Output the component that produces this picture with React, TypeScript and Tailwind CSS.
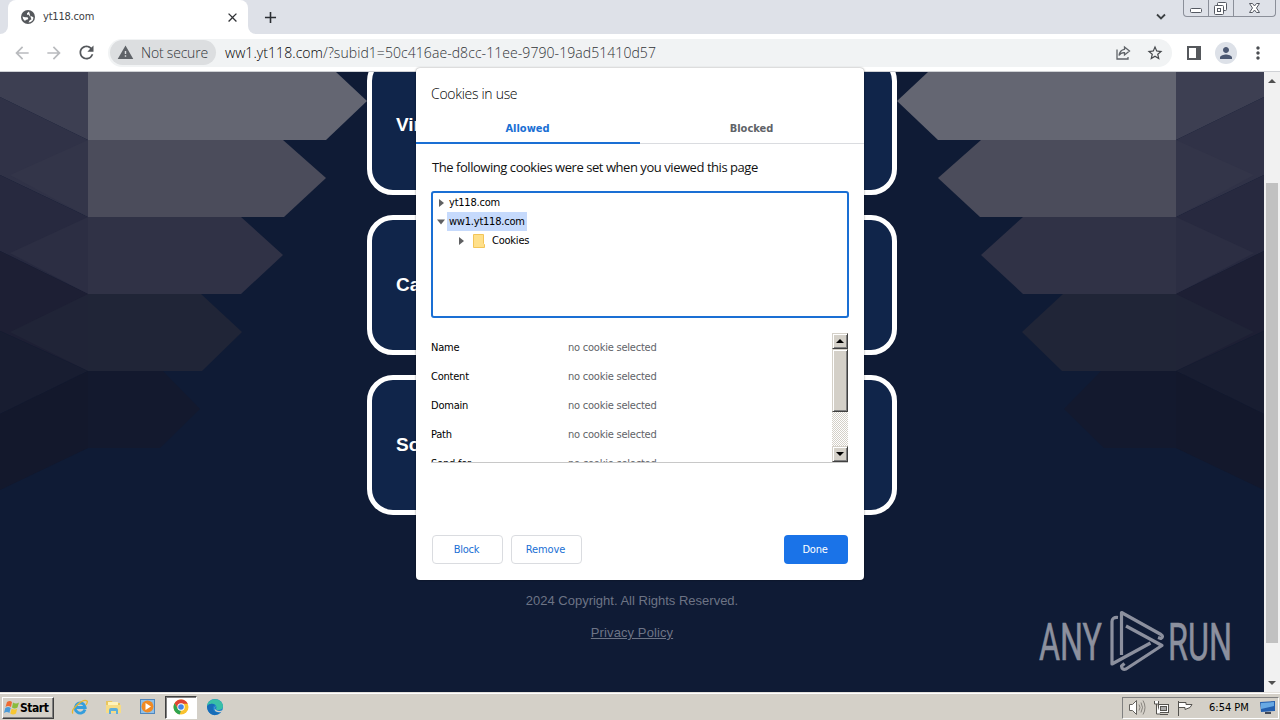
import React from "react";
import { MdArrowBack, MdArrowForward, MdRefresh, MdWarning, MdStarBorder, MdPerson, MdMoreVert, MdClose, MdAdd } from "react-icons/md";

function Globe() {
  return (
    <svg width="16" height="16" viewBox="0 0 16 16">
      <circle cx="8" cy="8" r="7" fill="#55585c" />
      <path d="M2.500 7.500 5 8.200h2.500l.8 1.300-1 1.300H6l-1 1.200A5.600 5.600 0 0 1 2.500 7.500Z" fill="#fff" />
      <path d="M9 2.600 7 4.200v1.600h2l.5 1.500h2.200l1.800 1.200A5.600 5.600 0 0 1 8.500 13.500l1.200-2.200 1.800-1-.6-1.400" fill="#fff" />
    </svg>
  );
}

function TabStrip() {
  return (
    <div className="flex h-[34px] bg-[#dee1e8]">
      <div className="flex w-2 shrink-0 bg-white"><div className="w-2 rounded-br-lg bg-[#dee1e8]" /></div>
      <div className="flex w-[240px] shrink-0 items-center rounded-t-lg bg-white pl-3 pr-2">
        <Globe />
        <span className="ml-[7px] flex-1 pt-px text-[11px] tracking-[-0.2px] text-[#3c4043]">yt118.com</span>
        <MdClose className="text-[#303236]" size={15} />
      </div>
      <div className="flex w-2 shrink-0 bg-white"><div className="w-2 rounded-bl-lg bg-[#dee1e8]" /></div>
      <div className="flex w-7 items-center justify-center"><MdAdd size={19} className="text-[#2b2e33]" /></div>
      <div className="flex-1" />
      <svg width="12" height="34" className="mr-[16px]"><path d="m2 14.500 4 4 4-4" fill="none" stroke="#3c4043" strokeWidth="1.800" /></svg>
      <div className="mr-[4px] flex h-[17px] rounded-b-[4px] border border-t-0 border-[#8b8f99]">
        <div className="w-[25px] border-r border-[#8b8f99]">
          <svg width="24" height="16"><rect x="6.500" y="8.500" width="11" height="4" rx="1" fill="#fff" stroke="#555962" /></svg>
        </div>
        <div className="w-[25px] border-r border-[#8b8f99]">
          <svg width="24" height="16" fill="#fff" stroke="#555962"><rect x="8.500" y="2.500" width="9" height="8" rx="1" /><rect x="5.500" y="5.500" width="9" height="9" rx="1" /><rect x="8.500" y="8.500" width="3" height="3" /></svg>
        </div>
        <div className="w-[41px]">
          <svg width="41" height="16"><path d="M15.500 3.500h3l2 2.500 2-2.500h3L22.500 8l3 4.500h-3l-2-2.500-2 2.500h-3l3-4.500Z" fill="#fff" stroke="#555962" /></svg>
        </div>
      </div>
    </div>
  );
}

function Toolbar() {
  return (
    <div className="flex h-[38px] items-center border-b border-[#cfd1d5] bg-white pl-3">
      <MdArrowBack size={20} className="text-[#b9bbbe]" />
      <MdArrowForward size={20} className="ml-[12px] text-[#b9bbbe]" />
      <MdRefresh size={21} className="ml-[12px] text-[#55585c]" />
      <div className="ml-[11px] flex h-7 w-[1064px] items-center rounded-full bg-[#f1f3f4]">
        <div className="ml-0.5 flex h-[25px] w-[106px] items-center rounded-full bg-[#dcdee0] pl-[7px]">
          <MdWarning size={17} className="text-[#5f6368]" />
          <span className="ml-[7px] whitespace-nowrap font-['Open_Sans',sans-serif] text-[14px] font-light tracking-[-0.2px] text-[#33363a]">Not secure</span>
        </div>
        <span className="ml-[9px] flex-1 whitespace-nowrap font-['Open_Sans',sans-serif] text-[14px] font-light tracking-[0.065px] text-black">ww1.yt118.com<span className="text-[#303236]">/?subid1=50c416ae-d8cc-11ee-9790-19ad51410d57</span></span>
        <svg width="18" height="18" viewBox="0 0 18 18" fill="none" stroke="#5f6368" strokeWidth="1.300" className="mr-[14px]"><path d="M3 5.500v9.500h11v-2M10.500 3l5 4-5 4V8.700C8 8.500 6.200 9.500 5 11.500 5.500 8 7.500 5.700 10.500 5.300Z" /></svg>
        <MdStarBorder size={18} className="mr-[8px] text-[#45484c]" />
      </div>
      <svg width="14" height="14" className="ml-[15px]"><rect x="1" y="1" width="12" height="12" fill="none" stroke="#55585c" strokeWidth="2" /><rect x="9" y="1" width="4" height="12" fill="#55585c" /></svg>
      <div className="ml-[14px] flex h-[22px] w-[22px] items-center justify-center rounded-full bg-[#dde1e8]"><MdPerson size={18} className="text-[#4c5872]" /></div>
      <MdMoreVert size={20} className="ml-[11px] text-[#4b4e52]" />
    </div>
  );
}

function Ribbons() {
  return (
    <>
      <path d="M88 72H336L367 101 326 140H88Z" fill="#646672" />
      <path d="M88 140H283L326 178 284 217H88Z" fill="#4b4c5b" />
      <path d="M88 217H241L283 255 241 294H88Z" fill="#303246" />
      <path d="M88 294H201L242 332 202 371H88Z" fill="#202537" />
      <path d="M88 371H163L200 409 160 448H88Z" fill="#13192e" />
      <path d="M0 72H88V140L0 97Z" fill="#3d3f52" />
      <path d="M0 97 88 140V217L0 175Z" fill="#303247" />
      <path d="M88 140 10 175 88 217Z" fill="#333549" />
      <path d="M0 175 88 217V294L0 251Z" fill="#27293f" />
      <path d="M88 217 10 253 88 294Z" fill="#2c2e43" />
      <path d="M0 251 88 294V371L0 331Z" fill="#1d1f34" />
      <path d="M88 294 10 332 88 371Z" fill="#202437" />
      <path d="M0 331 88 371 0 414Z" fill="#181d31" />
      <path d="M0 414 88 371V448L0 490Z" fill="#13182c" />
    </>
  );
}

function Watermark() {
  return (
    <svg width="204" height="66" viewBox="1035 607 204 66" className="absolute left-[1035px] top-[535px]" fill="#8c909e">
      <text x="1039" y="659.500" fontSize="52" fontFamily="Roboto" stroke="#8c909e" strokeWidth=".6" textLength="63" lengthAdjust="spacingAndGlyphs">ANY</text>
      <text x="1168" y="659.500" fontSize="52" fontFamily="Roboto" stroke="#8c909e" strokeWidth=".6" textLength="64" lengthAdjust="spacingAndGlyphs">RUN</text>
      <g fill="none" stroke="#8c909e" strokeWidth="3.200" strokeLinejoin="round">
        <path d="M1118 617.500q-6-.5-6 4v42.500l38.500-21" />
        <path d="M1121.500 655V612.500L1161 634.500q3 2 0 4l-3-1" />
        <path d="M1126 626 1162 645.500 1126 669q-4 1.500-4.500-3l3-2.500" />
      </g>
    </svg>
  );
}

function Page() {
  return (
    <div className="flex h-[620px]">
      <div className="relative flex w-[1264px] flex-col items-center overflow-hidden bg-[#0f1b35]">
        <svg width="1264" height="620" viewBox="0 72 1264 620" className="absolute left-0 top-0">
          <Ribbons />
          <g transform="translate(1264 0) scale(-1 1)"><Ribbons /></g>
        </svg>
        <div className="relative -mt-[17px] flex flex-col gap-5">
          {["Vir", "Car", "Soc"].map((t) => (
            <div key={t} className="flex h-[140px] w-[530px] items-center rounded-[26px] border-[5px] border-white bg-[#10254a] pl-6 font-['Liberation_Sans',sans-serif] text-[19px] font-bold text-white">{t}</div>
          ))}
        </div>
        <p className="mt-[76px] font-['Liberation_Sans',sans-serif] text-[13px] leading-5 text-[#6d7485]">2024 Copyright. All Rights Reserved.</p>
        <p className="mt-[12px] font-['Liberation_Sans',sans-serif] text-[13px] leading-5 tracking-[0.1px] text-[#6d7485] underline">Privacy Policy</p>
        <Watermark />
      </div>
      <div className="flex w-4 flex-col items-center bg-[#f1f1f1]">
        <svg width="16" height="111"><path d="m4 11 4-4 4 4Z" fill="#505050" /></svg>
        <div className="h-[460px] w-3 bg-[#c1c1c1]" />
        <svg width="16" height="49"><path d="m4 38 4 4 4-4Z" fill="#505050" /></svg>
      </div>
    </div>
  );
}

function ClassicButton({ down }: { down?: boolean }) {
  return (
    <div className="flex h-4 w-4 shrink-0 items-center justify-center border border-b-[#404040] border-l-[#d4d0c8] border-r-[#404040] border-t-[#d4d0c8] bg-[#d4d0c8] shadow-[inset_1px_1px_#fff,inset_-1px_-1px_#808080]">
      <svg width="8" height="4">{down ? <path d="M0 0h8L4 4Z" /> : <path d="M0 4h8L4 0Z" />}</svg>
    </div>
  );
}

function Arrow({ open }: { open?: boolean }) {
  return <svg width="8" height="8" className="shrink-0">{open ? <path d="M0 1.500h8L4 6.500Z" fill="#5f6062" /> : <path d="M2 0v8l5-4Z" fill="#5f6062" />}</svg>;
}

function Dialog() {
  return (
    <div className="absolute left-[416px] top-[68px] flex h-[512px] w-[448px] flex-col rounded-[4px] bg-white text-[11px] tracking-[-0.22px] text-black shadow-[0_0_2px_rgba(0,0,0,0.5)]">
      <h1 className="mt-[16px] pl-[15px] font-['Open_Sans',sans-serif] text-[14px] font-light leading-5 tracking-[-0.3px] text-black">Cookies in use</h1>
      <div className="mt-[8px] flex h-8 text-center text-[11px] font-bold leading-[34px] tracking-[0px]">
        <div className="w-1/2 border-b-2 border-[#1a6fd4] pr-px text-[#1a6fd4]">Allowed</div>
        <div className="w-1/2 border-b border-[#dadce0] pr-px text-[#5f6368]">Blocked</div>
      </div>
      <p className="mt-[13px] pl-4 font-['Open_Sans',sans-serif] text-[13px] leading-5 tracking-[-0.45px] text-[#111]">The following cookies were set when you viewed this page</p>
      <div className="ml-[15px] mt-[14px] h-[127px] w-[418px] rounded-[3px] border-2 border-[#1a6fd4] pl-1">
        <div className="flex h-[19px] items-center"><Arrow /><span className="ml-[2px] px-0.5 pt-[2px]">yt118.com</span></div>
        <div className="flex h-[19px] items-center"><Arrow open /><span className="ml-[2px] h-[19px] bg-[#c6dafc] px-0.5 leading-[20px]">ww1.yt118.com</span></div>
        <div className="flex h-[19px] items-center pl-5">
          <Arrow />
          <svg width="12" height="14" className="ml-2"><path d="M.5.500h10v9l1 1v3H.5Z" fill="#ffe08a" stroke="#f3c558" /></svg>
          <span className="ml-[7px] pt-[2px]">Cookies</span>
        </div>
      </div>
      <div className="ml-[15px] mt-[15px] flex h-[130px] w-[417px] border-b border-[#c8c8c8]">
        <div className="flex-1 overflow-hidden pt-px">
          {["Name", "Content", "Domain", "Path", "Send for"].map((t) => (
            <div key={t} className="flex h-[29px] items-center"><span className="w-[137px]">{t}</span><span className="text-[#5f6368]">no cookie selected</span></div>
          ))}
        </div>
        <div className="flex w-4 flex-col bg-[#ebe8e3]">
          <ClassicButton />
          <div className="h-[63px] border border-b-[#404040] border-l-[#d4d0c8] border-r-[#404040] border-t-[#d4d0c8] bg-[#d4d0c8] shadow-[inset_1px_1px_#fff,inset_-1px_-1px_#808080]" />
          <div className="flex-1 bg-[conic-gradient(#fff_25%,#d4d0c8_0_50%,#fff_0_75%,#d4d0c8_0)] bg-[length:2px_2px]" />
          <ClassicButton down />
        </div>
      </div>
      <div className="mt-[72px] flex h-[29px] gap-2 px-4 text-[#1a6fd4]">
        <button className="w-[71px] rounded-[4px] border border-[#dadce0] pr-[2px] pt-px">Block</button>
        <button className="w-[71px] rounded-[4px] border border-[#dadce0] pr-[2px] pt-px tracking-[-0.1px]">Remove</button>
        <div className="flex-1" />
        <button className="w-16 rounded-[4px] bg-[#1a73e8] pr-[2px] pt-px text-white">Done</button>
      </div>
    </div>
  );
}

function WinFlag() {
  return (
    <svg width="16" height="16" viewBox="0 0 16 16">
      <path d="M3 2q3-2 5 0L7 7Q4 5 1.500 7Z" fill="#ee6a32" /><path d="M9 2.500q3 2 6 0L13.500 7.500q-3 2-5.500 0Z" fill="#8abb3c" />
      <path d="M1.300 8q3-2 5.400 0L5.400 13Q3 11 0 13Z" fill="#4a9ad8" /><path d="M7.700 8.500q3 2 5.500 0L12 13.500q-3 2-5.700 0Z" fill="#f8c732" />
    </svg>
  );
}

function Taskbar() {
  return (
    <div className="flex h-7 items-center border-t border-[#e4e1dc] bg-[#d4d0c8] shadow-[inset_0_1px_#fff]">
      <div className="mt-[2px] ml-[2px] flex h-[22px] w-[52px] items-center border border-b-[#404040] border-l-white border-r-[#404040] border-t-white pl-[1px] text-[12px] font-bold tracking-[-0.45px] text-black shadow-[inset_-1px_-1px_#808080]"><WinFlag /><span>Start</span></div>
      <svg width="18" height="18" viewBox="0 0 18 18" className="ml-[17px]">
        <path d="M14 11.500A5 5 0 1 1 14.200 9.500H5" fill="none" stroke="#359edc" strokeWidth="2.800" /><path d="M2 15.500C-1 12 12 0 16 3q1 1-1 4" fill="none" stroke="#e8b62c" strokeWidth="1.300" />
      </svg>
      <svg width="18" height="18" viewBox="0 0 18 18" className="ml-[16px]">
        <path d="M1 3h6l1 2h7v9H1Z" fill="#e9c65e" /><path d="M3 4h10v5H3Z" fill="#fff3ba" /><path d="M1 7h15v8H1Z" fill="#f6dc86" /><path d="M4 16v-4q0-2 2-2h5q2 0 2 2v4h-2v-3H6v3Z" fill="#5daedb" />
      </svg>
      <svg width="18" height="18" viewBox="0 0 18 18" className="ml-[16px]">
        <rect x="1.500" y="1.500" width="14" height="14" fill="#8fc0e9" stroke="#5087bd" /><circle cx="8.500" cy="8.500" r="6" fill="#f08a24" /><path d="M6.500 5v7l5.500-3.500Z" fill="#fff" />
      </svg>
      <div className="mt-[1px] ml-[8px] flex h-[23px] w-[32px] items-center justify-center border border-b-white border-l-[#404040] border-r-white border-t-[#404040] bg-white shadow-[inset_1px_1px_#808080]">
        <svg width="16" height="16" viewBox="0 0 16 16">
          <circle cx="8" cy="8" r="7.500" fill="#f9c22e" /><path d="M1.500 4.300a7.500 7.500 0 0 1 13.300.500H8L5 10Z" fill="#df4435" /><path d="M1.500 4.300 5 10l3 1.500-1.300 3.900A7.500 7.500 0 0 1 1.500 4.300Z" fill="#2fa450" /><circle cx="8" cy="8" r="3.700" fill="#fff" /><circle cx="8" cy="8" r="2.800" fill="#4285e8" />
        </svg>
      </div>
      <svg width="18" height="18" viewBox="0 0 18 18" className="ml-[9px]">
        <circle cx="9" cy="9" r="8" fill="#1a7fcb" /><path d="M1 8C2-1 16-1 17 8q0 4-5 4-3 0-1.500-2C11 6 5 4 1 8Z" fill="#39bfa7" /><path d="M1 8q4-4 8-1-4 2-1 6 3 3 7 1-5 5-10 2-4-3-4-8Z" fill="#176cb8" /><path d="M9.500 8q-2 2 .5 4 3 2 7 0l-1.500 2Q9 15 8.500 11Z" fill="#d4d0c8" />
      </svg>
      <div className="flex-1" />
      <div className="mt-[2px] mr-[1px] flex h-[22px] w-[157px] items-center border border-b-white border-l-[#808080] border-r-white border-t-[#808080] pl-[6px] text-[11px] text-black">
        <svg width="17" height="17" viewBox="0 0 17 17" fill="#fff" stroke="#65635f"><path d="M.5 5.500h3l4-4v14l-4-4h-3Z" /><path d="M10 5.500q2 3 0 6M12 3.500q3 5 0 10M14 1.500q4 7 0 14" fill="none" strokeWidth=".7" /></svg>
        <svg width="16" height="16" viewBox="0 0 16 16" fill="#fff" stroke="#55534f" className="ml-[7px]"><rect x="5.500" y="4.500" width="10" height="8" /><rect x="7.500" y="6.500" width="6" height="4" fill="#aaa" /><path d="M7 14.500h8M1.500 1v3h4V1M3.500 4v10h4" /></svg>
        <svg width="16" height="16" viewBox="0 0 16 16" fill="#fff" stroke="#55534f" className="ml-[8px]"><path d="M1.500 1v15M2 2.500h7v2h6l-2 3-5 2v-2H2" /></svg>
        <span className="ml-[16px] flex-1 whitespace-nowrap pt-px">6:54 PM</span>
        <svg width="16" height="14" viewBox="0 0 16 14" className="mr-[2px]"><path d="M0 1 15 0v10L1 11Z" fill="#245fae" /><path d="M1 2 14 1v4L1 8Z" fill="#68a9e4" /><path d="M5 11h6v2H5Z" fill="#424957" /></svg>
      </div>
    </div>
  );
}

export default function App() {
  return (
    <div className="relative h-[720px] w-[1280px] overflow-hidden font-['DejaVu_Sans_Condensed','DejaVu_Sans',sans-serif]">
      <TabStrip />
      <Toolbar />
      <Page />
      <Taskbar />
      <Dialog />
    </div>
  );
}
